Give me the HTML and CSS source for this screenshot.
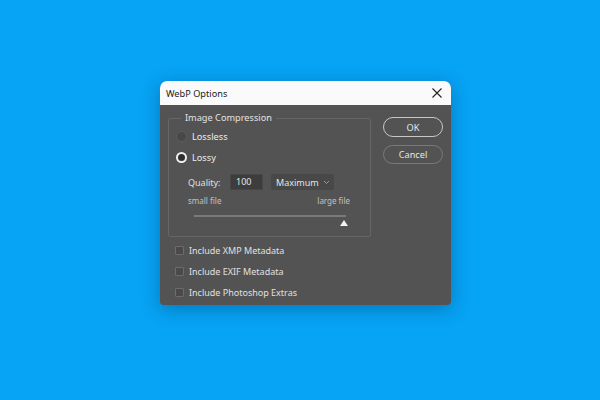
FILE: index.html
```html
<!DOCTYPE html>
<html>
<head>
<meta charset="utf-8">
<link rel="stylesheet" href="styles.css">
</head>
<body>
<div class="stage">
  <div class="dialog">
    <div class="titlebar">
      <span class="title">WebP Options</span>
      <svg class="close" width="12" height="12" viewBox="0 0 12 12"><path d="M1.5 1.5L10.5 10.5M10.5 1.5L1.5 10.5" stroke="#222" stroke-width="1.1" fill="none"/></svg>
    </div>
    <div class="body">
      <div class="main">
        <fieldset class="group">
          <legend>Image Compression</legend>
          <div class="radio-row"><span class="radio"></span><span>Lossless</span></div>
          <div class="radio-row"><span class="radio on"></span><span>Lossy</span></div>
          <div class="quality">
            <span class="qlabel">Quality:</span>
            <span class="num">100</span>
            <span class="select">Maximum <svg width="7" height="5" viewBox="0 0 7 5"><path d="M1 1L3.5 3.5L6 1" stroke="#9a9a9a" stroke-width="1" fill="none"/></svg></span>
          </div>
          <div class="labels"><span>small file</span><span>large file</span></div>
          <div class="slider"><div class="track"></div><div class="thumb"></div></div>
        </fieldset>
        <div class="checks">
          <div class="check-row"><span class="box"></span><span>Include XMP Metadata</span></div>
          <div class="check-row"><span class="box"></span><span>Include EXIF Metadata</span></div>
          <div class="check-row"><span class="box"></span><span>Include Photoshop Extras</span></div>
        </div>
      </div>
      <div class="buttons">
        <div class="btn ok">OK</div>
        <div class="btn cancel">Cancel</div>
      </div>
    </div>
  </div>
</div>
</body>
</html>
```
FILE: styles.css
```css
* { box-sizing: border-box; }
html, body { margin: 0; padding: 0; }
body {
  width: 600px; height: 400px;
  background: #07a3f4;
  font-family: "Noto Sans", "Open Sans", sans-serif;
  overflow: hidden;
}
.stage {
  width: 600px; height: 400px;
  padding-top: 81px;
  padding-left: 160px;
}
.dialog {
  width: 291px; height: 224px;
  border-radius: 7px 7px 4px 4px;
  background: #535353;
  box-shadow: 0 4px 18px rgba(0,40,80,0.35);
  overflow: hidden;
}
.titlebar {
  height: 24px;
  background: #fafafa;
  display: flex;
  align-items: center;
  justify-content: space-between;
  padding: 0 8px 0 6px;
}
.title { font-size: 9.2px; color: #1a1a1a; }
.close { display: block; }
.body {
  display: flex;
  padding: 7px 8px 0 8px;
}
.main { width: 203px; }
.group {
  margin: 0;
  border: 1px solid #666;
  border-radius: 2px;
  padding: 0;
  height: 125px;
  color: #e6e6e6;
  font-size: 9px;
}
.group legend {
  padding: 0 4px;
  margin-left: 12px;
  font-size: 9.2px;
  color: #e2e2e2;
  line-height: 12px;
}
.radio-row {
  display: flex; align-items: center; gap: 5px;
  height: 21px;
  padding-left: 7px;
  font-size: 9.2px;
  color: #ececec;
}
.radio-row:first-of-type { margin-top: 2px; }
.radio {
  width: 11px; height: 11px; border-radius: 50%;
  border: 1px solid #5e5e5e;
  background: #484848;
}
.radio.on {
  background: #2e2e2e;
  border: 2.5px solid #efefef;
}
.quality {
  display: flex; align-items: center;
  margin-top: 6px;
  padding-left: 19px;
  height: 16px;
  font-size: 9px;
  color: #e0e0e0;
}
.qlabel { width: 42px; }
.num {
  width: 33px; height: 16px;
  background: #3d3d3d;
  border: 1px solid #474747;
  padding-left: 5px;
  line-height: 14px;
  color: #e6e6e6;
}
.select {
  margin-left: 8px;
  width: 63px; height: 16px;
  background: #484848;
  border-radius: 2px;
  display: flex; align-items: center; justify-content: space-between;
  padding: 0 4px 0 5px;
  color: #e6e6e6;
}
.labels {
  display: flex; justify-content: space-between;
  padding: 0 20px 0 19px;
  margin-top: 5px;
  font-size: 8px;
  color: #c2c2c2;
  height: 12px;
  line-height: 12px;
}
.slider {
  position: relative;
  margin: 8px 0 0 25px;
  width: 152px; height: 12px;
}
.track {
  margin-top: 5px;
  height: 2px; background: #7a7a7a;
}
.thumb {
  position: absolute;
  left: 146px; top: 5px;
  width: 0; height: 0;
  border-left: 4px solid transparent;
  border-right: 4px solid transparent;
  border-bottom: 6px solid #f2f2f2;
}
.checks { margin-top: 3px; padding-left: 7px; }
.check-row {
  display: flex; align-items: center; gap: 5px;
  height: 21px;
  font-size: 9px;
  color: #e0e0e0;
}
.box {
  width: 9px; height: 9px;
  border: 1px solid #6c6c6c;
  border-radius: 1px;
  background: #4a4a4a;
}
.buttons {
  margin-left: 12px;
  padding-top: 5px;
  display: flex; flex-direction: column; gap: 8px;
}
.btn {
  width: 60px; height: 20px;
  border-radius: 10px;
  display: flex; align-items: center; justify-content: center;
  font-size: 9.2px;
  color: #e6e6e6;
}
.ok { border: 1px solid #c8c8c8; }
.cancel { border: 1px solid #7a7a7a; height: 19px; }
```
